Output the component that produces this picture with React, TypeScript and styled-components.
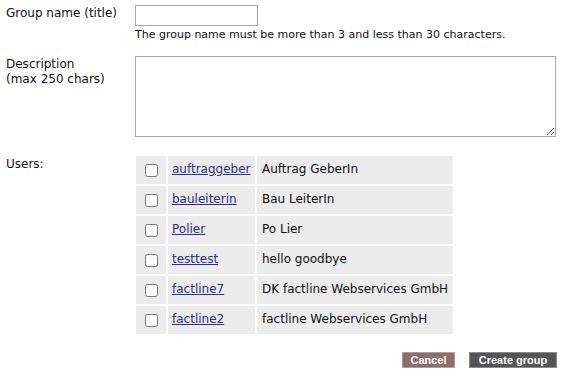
import React from "react";
import styled, { createGlobalStyle } from "styled-components";

const GlobalStyle = createGlobalStyle`
  html, body {
    margin: 0;
    padding: 0;
    background: #fff;
  }
  body {
    font-family: "DejaVu Sans", Verdana, sans-serif;
    font-size: 12px;
    color: #111;
  }
`;

const users = [
  { login: "auftraggeber", name: "Auftrag GeberIn" },
  { login: "bauleiterin", name: "Bau LeiterIn" },
  { login: "Polier", name: "Po Lier" },
  { login: "testtest", name: "hello goodbye" },
  { login: "factline7", name: "DK factline Webservices GmbH" },
  { login: "factline2", name: "factline Webservices GmbH" },
];

export default function App() {
  return (
    <>
      <GlobalStyle />
      <Form>
        <Row $gap={15}>
          <Label>Group name (title)</Label>
          <Field>
            <TitleInput type="text" />
            <Hint>The group name must be more than 3 and less than 30 characters.</Hint>
          </Field>
        </Row>
        <Row $gap={17}>
          <Label>
            Description
            <br />
            (max 250 chars)
          </Label>
          <Field>
            <Description />
          </Field>
        </Row>
        <Row $gap={16}>
          <Label $top={3}>Users:</Label>
          <Field>
            <UserTable>
              <tbody>
                {users.map((u) => (
                  <tr key={u.login}>
                    <CheckCell>
                      <Check type="checkbox" />
                    </CheckCell>
                    <LoginCell>
                      <a href="#">{u.login}</a>
                    </LoginCell>
                    <NameCell>{u.name}</NameCell>
                  </tr>
                ))}
              </tbody>
            </UserTable>
          </Field>
        </Row>
        <Actions>
          <Button $variant="cancel">Cancel</Button>
          <Button $variant="submit">Create group</Button>
        </Actions>
      </Form>
    </>
  );
}

const Form = styled.div`
  padding: 5px 9px 0 6px;
  width: 566px;
  box-sizing: border-box;
`;

const Row = styled.div<{ $gap: number }>`
  display: grid;
  grid-template-columns: 129px 1fr;
  margin-bottom: ${(p) => p.$gap}px;
`;

const Label = styled.div<{ $top?: number }>`
  padding-top: ${(p) => p.$top ?? 1}px;
  line-height: 15px;
`;

const Field = styled.div`
  display: flex;
  flex-direction: column;
  align-items: flex-start;
`;

const TitleInput = styled.input`
  width: 123px;
  height: 21px;
  box-sizing: border-box;
  border: 1px solid #a9a9a9;
  padding: 2px 3px;
  margin: 0;
  font: inherit;
`;

const Hint = styled.div`
  font-size: 11px;
  line-height: 13px;
  margin-top: 2px;
`;

const Description = styled.textarea`
  width: 421px;
  height: 81px;
  box-sizing: border-box;
  border: 1px solid #a9a9a9;
  margin: 0;
  font: inherit;
`;

const UserTable = styled.table`
  border-collapse: separate;
  border-spacing: 2px;
  margin-left: -1px;

  td {
    background: #ececec;
    height: 28px;
    box-sizing: border-box;
    padding: 0;
    line-height: 14px;
    vertical-align: middle;
  }
`;

const CheckCell = styled.td`
  width: 30px;
`;

const Check = styled.input`
  display: block;
  margin: 1px auto 0;
  width: 13px;
  height: 13px;
`;

const LoginCell = styled.td`
  width: 87px;
  padding: 0 0 2px 4px !important;

  a {
    color: #2b2b9e;
  }
`;

const NameCell = styled.td`
  width: 196px;
  padding: 0 0 2px 5px !important;
`;

const Actions = styled.div`
  display: flex;
  justify-content: flex-end;
  gap: 14px;
`;

const Button = styled.button<{ $variant: "cancel" | "submit" }>`
  font-family: "Liberation Sans", Arial, sans-serif;
  font-weight: bold;
  font-size: 11px;
  color: #fff;
  height: 16px;
  padding: 0;
  line-height: 14px;
  white-space: nowrap;
  border: 1px solid ${(p) => (p.$variant === "cancel" ? "#b89a9a" : "#8a8a8a")};
  background: ${(p) => (p.$variant === "cancel" ? "#8e6d6d" : "#555555")};
  border-radius: 0;
  width: ${(p) => (p.$variant === "cancel" ? "53px" : "88px")};
`;
